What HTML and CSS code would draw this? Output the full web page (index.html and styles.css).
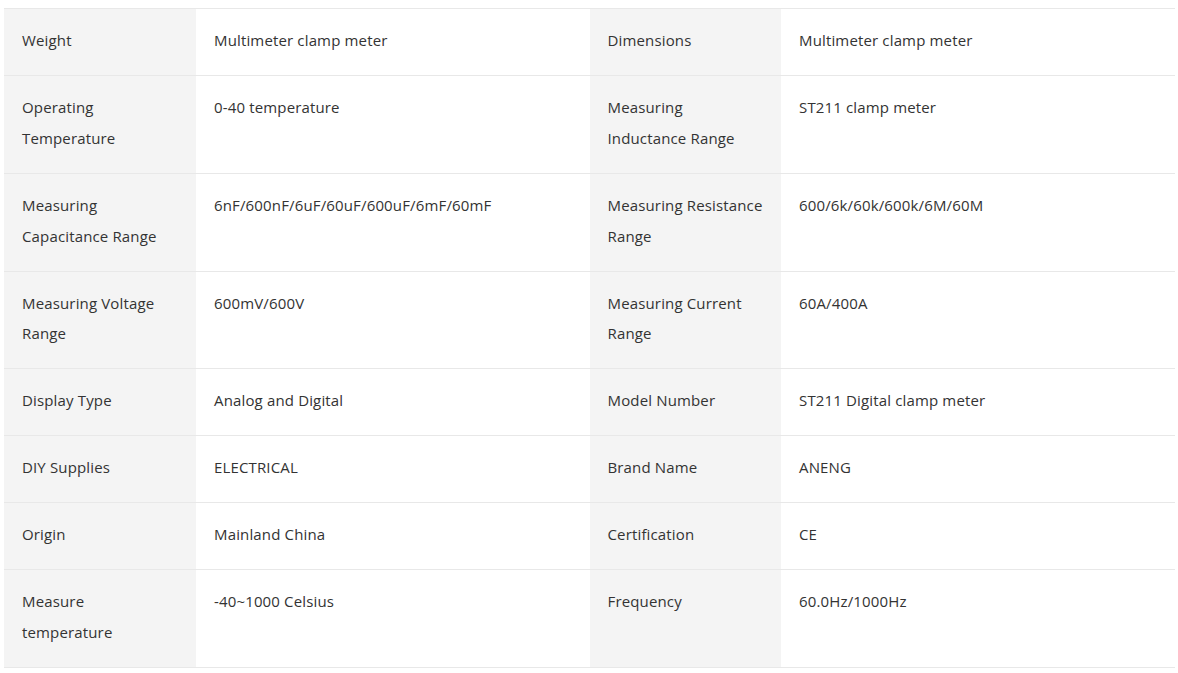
FILE: index.html
```html
<!DOCTYPE html>
<html lang="en">
<head>
<meta charset="utf-8">
<title>Specifications</title>
<link rel="stylesheet" href="styles.css">
</head>
<body>
<div class="wrap">
<table class="specs">
  <colgroup>
    <col class="c-label1">
    <col class="c-value1">
    <col class="c-label2">
    <col class="c-value2">
  </colgroup>
  <tbody>
    <tr>
      <td class="label label-a">Weight</td>
      <td class="value">Multimeter clamp meter</td>
      <td class="label label-b">Dimensions</td>
      <td class="value">Multimeter clamp meter</td>
    </tr>
    <tr>
      <td class="label label-a">Operating Temperature</td>
      <td class="value">0-40 temperature</td>
      <td class="label label-b">Measuring Inductance Range</td>
      <td class="value">ST211 clamp meter</td>
    </tr>
    <tr>
      <td class="label label-a">Measuring Capacitance Range</td>
      <td class="value">6nF/600nF/6uF/60uF/600uF/6mF/60mF</td>
      <td class="label label-b">Measuring Resistance Range</td>
      <td class="value">600/6k/60k/600k/6M/60M</td>
    </tr>
    <tr>
      <td class="label label-a">Measuring Voltage Range</td>
      <td class="value">600mV/600V</td>
      <td class="label label-b">Measuring Current Range</td>
      <td class="value">60A/400A</td>
    </tr>
    <tr>
      <td class="label label-a">Display Type</td>
      <td class="value">Analog and Digital</td>
      <td class="label label-b">Model Number</td>
      <td class="value">ST211 Digital clamp meter</td>
    </tr>
    <tr>
      <td class="label label-a">DIY Supplies</td>
      <td class="value">ELECTRICAL</td>
      <td class="label label-b">Brand Name</td>
      <td class="value">ANENG</td>
    </tr>
    <tr>
      <td class="label label-a">Origin</td>
      <td class="value">Mainland China</td>
      <td class="label label-b">Certification</td>
      <td class="value">CE</td>
    </tr>
    <tr>
      <td class="label label-a">Measure temperature</td>
      <td class="value">-40~1000 Celsius</td>
      <td class="label label-b">Frequency</td>
      <td class="value">60.0Hz/1000Hz</td>
    </tr>
  </tbody>
</table>
</div>
</body>
</html>
```

FILE: styles.css
```css
html, body {
  margin: 0;
  padding: 0;
  background: #ffffff;
}

.wrap {
  padding: 8px 3px 0 4px;
}

.specs {
  width: 1171px;
  border-collapse: collapse;
  table-layout: fixed;
  font-family: "Open Sans", "Liberation Sans", sans-serif;
  font-size: 15px;
  letter-spacing: 0.15px;
  line-height: 30.75px;
  color: #333333;
}

.c-label1 { width: 192px; }
.c-value1 { width: 394px; }
.c-label2 { width: 191px; }
.c-value2 { width: 394px; }

.specs td {
  border-top: 1px solid #e8e8e8;
  border-bottom: 1px solid #e8e8e8;
  padding: 16.125px 18px 19.125px 18px;
  vertical-align: top;
  text-align: left;
}

.specs .label {
  background: #f4f4f4;
}

.specs .label-a {
  padding-right: 22px;
}

.specs .label-b {
  padding-left: 17.5px;
  padding-right: 18px;
}

.specs .value {
  background: #ffffff;
}
```
